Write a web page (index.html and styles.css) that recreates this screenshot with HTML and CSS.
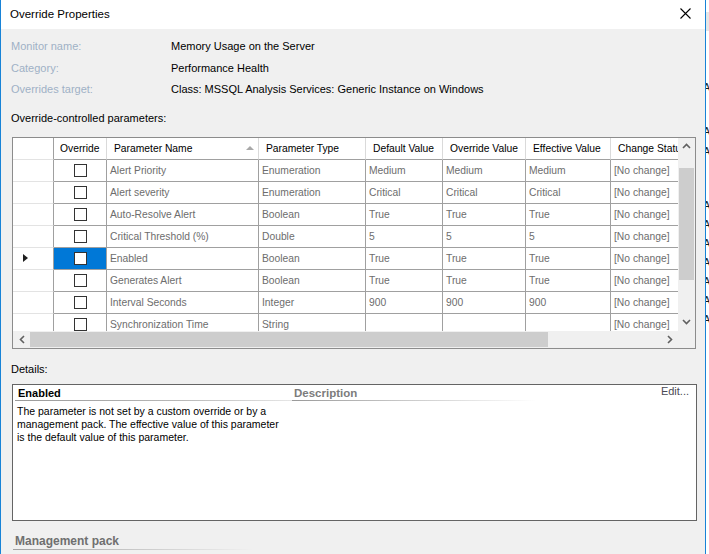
FILE: index.html
```html
<!DOCTYPE html>
<html>
<head>
<meta charset="utf-8">
<title>Override Properties</title>
<link rel="stylesheet" href="styles.css">
</head>
<body>
<div class="screen">
  <div class="dialog">
    <div class="titlebar">
      <span class="title">Override Properties</span>
      <svg class="close" width="11" height="11" viewBox="0 0 11 11"><path d="M0.5 0.5 L10.5 10.5 M10.5 0.5 L0.5 10.5" stroke="#000" stroke-width="1.1" fill="none"/></svg>
    </div>
    <div class="content">
      <div class="info">
        <div class="info-row"><span class="label">Monitor name:</span><span class="value">Memory Usage on the Server</span></div>
        <div class="info-row"><span class="label">Category:</span><span class="value">Performance Health</span></div>
        <div class="info-row"><span class="label">Overrides target:</span><span class="value">Class: MSSQL Analysis Services: Generic Instance on Windows</span></div>
      </div>
      <div class="section-label params-label">Override-controlled parameters:</div>
      <div class="grid">
        <div class="grid-main">
          <div class="viewport">
            <div class="row head">
              <div class="cell rh"></div>
              <div class="cell hc center">Override</div>
              <div class="cell hc sorted">Parameter Name<span class="sort"></span></div>
              <div class="cell hc">Parameter Type</div>
              <div class="cell hc">Default Value</div>
              <div class="cell hc">Override Value</div>
              <div class="cell hc">Effective Value</div>
              <div class="cell hc">Change Status</div>
            </div>
            <div class="row">
              <div class="cell rh"></div>
              <div class="cell chk"><span class="box"></span></div>
              <div class="cell">Alert Priority</div>
              <div class="cell">Enumeration</div>
              <div class="cell">Medium</div>
              <div class="cell">Medium</div>
              <div class="cell">Medium</div>
              <div class="cell">[No change]</div>
            </div>
            <div class="row">
              <div class="cell rh"></div>
              <div class="cell chk"><span class="box"></span></div>
              <div class="cell">Alert severity</div>
              <div class="cell">Enumeration</div>
              <div class="cell">Critical</div>
              <div class="cell">Critical</div>
              <div class="cell">Critical</div>
              <div class="cell">[No change]</div>
            </div>
            <div class="row">
              <div class="cell rh"></div>
              <div class="cell chk"><span class="box"></span></div>
              <div class="cell">Auto-Resolve Alert</div>
              <div class="cell">Boolean</div>
              <div class="cell">True</div>
              <div class="cell">True</div>
              <div class="cell">True</div>
              <div class="cell">[No change]</div>
            </div>
            <div class="row">
              <div class="cell rh"></div>
              <div class="cell chk"><span class="box"></span></div>
              <div class="cell">Critical Threshold (%)</div>
              <div class="cell">Double</div>
              <div class="cell">5</div>
              <div class="cell">5</div>
              <div class="cell">5</div>
              <div class="cell">[No change]</div>
            </div>
            <div class="row">
              <div class="cell rh current"><span class="tri"></span></div>
              <div class="cell chk selected"><span class="box"></span></div>
              <div class="cell">Enabled</div>
              <div class="cell">Boolean</div>
              <div class="cell">True</div>
              <div class="cell">True</div>
              <div class="cell">True</div>
              <div class="cell">[No change]</div>
            </div>
            <div class="row">
              <div class="cell rh"></div>
              <div class="cell chk"><span class="box"></span></div>
              <div class="cell">Generates Alert</div>
              <div class="cell">Boolean</div>
              <div class="cell">True</div>
              <div class="cell">True</div>
              <div class="cell">True</div>
              <div class="cell">[No change]</div>
            </div>
            <div class="row">
              <div class="cell rh"></div>
              <div class="cell chk"><span class="box"></span></div>
              <div class="cell">Interval Seconds</div>
              <div class="cell">Integer</div>
              <div class="cell">900</div>
              <div class="cell">900</div>
              <div class="cell">900</div>
              <div class="cell">[No change]</div>
            </div>
            <div class="row">
              <div class="cell rh"></div>
              <div class="cell chk"><span class="box"></span></div>
              <div class="cell">Synchronization Time</div>
              <div class="cell">String</div>
              <div class="cell"></div>
              <div class="cell"></div>
              <div class="cell"></div>
              <div class="cell">[No change]</div>
            </div>
          </div>
          <div class="vscroll">
            <div class="arrow"><svg width="9" height="6" viewBox="0 0 9 6"><path d="M1 5 L4.5 1.5 L8 5" stroke="#606060" stroke-width="1.6" fill="none"/></svg></div>
            <div class="vtrack"><div class="vthumb"></div></div>
            <div class="arrow"><svg width="9" height="6" viewBox="0 0 9 6"><path d="M1 1 L4.5 4.5 L8 1" stroke="#606060" stroke-width="1.6" fill="none"/></svg></div>
          </div>
        </div>
        <div class="hscroll-row">
          <div class="hscroll">
            <div class="harrow"><svg width="6" height="9" viewBox="0 0 6 9"><path d="M5 1 L1.5 4.5 L5 8" stroke="#606060" stroke-width="1.6" fill="none"/></svg></div>
            <div class="htrack"><div class="hthumb"></div></div>
            <div class="harrow"><svg width="6" height="9" viewBox="0 0 6 9"><path d="M1 1 L4.5 4.5 L1 8" stroke="#606060" stroke-width="1.6" fill="none"/></svg></div>
          </div>
          <div class="corner"></div>
        </div>
      </div>
      <div class="section-label details-label">Details:</div>
      <div class="details">
        <div class="details-head">
          <div class="dh dh-name">Enabled</div>
          <div class="dh dh-desc">Description</div>
          <div class="edit">Edit...</div>
        </div>
        <p class="details-text">The parameter is not set by a custom override or by a<br>management pack. The effective value of this parameter<br>is the default value of this parameter.</p>
      </div>
      <div class="mp">Management pack</div>
    </div>
  </div>
  <div class="behind">
    <div class="behind-bar"></div>
    <div class="behind-letters">
      <span class="ba l1">A</span>
      <span class="ba l2">A</span>
      <span class="ba l3">A</span>
      <span class="ba l4">A</span>
      <span class="ba l5">A</span>
      <span class="ba l5">A</span>
      <span class="ba l5">A</span>
      <span class="ba l5">A</span>
      <span class="ba l5">A</span>
      <span class="ba l5">A</span>
    </div>
  </div>
</div>
</body>
</html>
```
FILE: styles.css
```css
html, body {
  margin: 0;
  padding: 0;
  background: #ffffff;
}
body {
  font-family: "Liberation Sans", Arial, sans-serif;
  font-size: 11px;
  color: #000;
}
.screen {
  display: flex;
  width: 709px;
  height: 554px;
  overflow: hidden;
}
.dialog {
  width: 704px;
  flex: none;
  border-left: 1px solid #1883d7;
  border-right: 1px solid #1883d7;
  background: #f0f0f0;
  display: flex;
  flex-direction: column;
}
.titlebar {
  height: 29px;
  background: #fff;
  display: flex;
  align-items: center;
  justify-content: space-between;
  padding: 0 14px 0 9px;
}
.title {
  font-size: 11.5px;
  color: #000;
  margin-top: -1px;
}
.close {
  display: block;
  margin-top: -2px;
}
.content {
  padding: 7px 0 0 10px;
}
.info-row {
  display: flex;
  height: 21.5px;
  line-height: 21.5px;
}
.label {
  width: 160px;
  color: #9fb1c6;
}
.value {
  color: #000;
}
.section-label {
  line-height: 13px;
}
.params-label {
  margin-top: 11px;
}
.grid {
  margin: 12px 0 0 1px;
  width: 682px;
  border: 1px solid #8c8c8c;
  background: #f0f0f0;
}
.grid-main {
  display: flex;
  height: 193px;
}
.viewport {
  width: 665px;
  overflow: hidden;
  background: #fff;
}
.row {
  display: grid;
  grid-template-columns: 41px 53px 152px 107px 77px 83px 85px 90px;
  height: 22px;
  width: 688px;
}
.cell {
  box-sizing: border-box;
  height: 22px;
  border-right: 1px solid #a0a0a0;
  border-bottom: 1px solid #a0a0a0;
  padding-left: 3px;
  line-height: 21px;
  font-size: 10.3px;
  color: #6d6d6d;
  white-space: nowrap;
  overflow: hidden;
}
.cell.rh {
  border-bottom-color: #e3e3e3;
  display: flex;
  align-items: center;
}
.head .cell {
  color: #000;
  padding-left: 7px;
  border-right-color: #dadada;
}
.head .cell.rh {
  border-right-color: #a0a0a0;
}
.head .cell.center {
  padding-left: 6px;
}
.head .sorted {
  display: flex;
  align-items: center;
  justify-content: space-between;
  padding-right: 4px;
}
.sort {
  width: 0;
  height: 0;
  border-left: 4px solid transparent;
  border-right: 4px solid transparent;
  border-bottom: 4px solid #a8a8a8;
}
.tri {
  width: 0;
  height: 0;
  margin-left: 7px;
  border-top: 4px solid transparent;
  border-bottom: 4px solid transparent;
  border-left: 5px solid #1e1e1e;
}
.chk {
  display: flex;
  align-items: center;
  justify-content: center;
  padding-left: 0;
}
.chk.selected {
  background: #0078d7;
}
.box {
  box-sizing: border-box;
  width: 13px;
  height: 13px;
  border: 1px solid #333;
  background: #fff;
}
.vscroll {
  width: 17px;
  display: flex;
  flex-direction: column;
  background: #f0f0f0;
}
.arrow {
  height: 17px;
  display: flex;
  align-items: center;
  justify-content: center;
  flex: none;
}
.vtrack {
  flex: 1;
  padding-top: 13px;
}
.vthumb {
  margin: 0 1px;
  height: 112px;
  background: #cdcdcd;
}
.hscroll-row {
  display: flex;
  height: 17px;
}
.hscroll {
  width: 665px;
  display: flex;
  background: #f0f0f0;
}
.harrow {
  width: 17px;
  display: flex;
  align-items: center;
  justify-content: center;
  flex: none;
}
.htrack {
  flex: 1;
  padding: 1px 0;
}
.hthumb {
  width: 518px;
  height: 15px;
  background: #cdcdcd;
}
.corner {
  width: 17px;
  background: #f0f0f0;
}
.details-label {
  margin-top: 14px;
}
.details {
  margin: 8px 0 0 1px;
  width: 683px;
  height: 135px;
  border: 1px solid #646464;
  background: #fff;
}
.details-head {
  display: flex;
  align-items: flex-start;
  padding-left: 2px;
}
.dh {
  font-weight: bold;
  height: 16px;
  line-height: 14px;
  padding-top: 1px;
  box-sizing: border-box;
  background-repeat: no-repeat;
  background-position: left bottom;
  background-size: 100% 1px;
}
.dh-name {
  width: 277px;
  padding-left: 3px;
  color: #000;
  background-image: linear-gradient(to right, #9a9a9a, #b8b8b8 60%, #e6e6e6);
}
.dh-desc {
  width: 244px;
  padding-left: 2px;
  font-size: 11.5px;
  color: #7c7c7c;
  background-image: linear-gradient(to right, #9a9a9a, #ffffff);
}
.edit {
  margin-left: auto;
  margin-right: 7px;
  color: #4a4a55;
  line-height: 13px;
  padding-top: 0px;
}
.details-text {
  margin: 4px 0 0 4px;
  font-size: 10.5px;
  line-height: 13px;
  color: #000;
}
.mp {
  margin: 13px 0 0 2px;
  width: 238px;
  padding-left: 2px;
  font-size: 12px;
  font-weight: bold;
  color: #6f6f6f;
  line-height: 14px;
  padding-bottom: 2px;
  background-image: linear-gradient(to right, #a0a0a0, #f0f0f0);
  background-repeat: no-repeat;
  background-position: left bottom;
  background-size: 100% 1px;
}
.behind {
  flex: 1;
  background: #fff;
  overflow: hidden;
  position: relative;
}
.behind-bar {
  margin-top: 12px;
  height: 19px;
  background: #e6e6e6;
}
.behind-letters {
  display: flex;
  flex-direction: column;
  padding-top: 50px;
}
.ba {
  font-size: 11px;
  line-height: 13px;
  color: #1a1a1a;
  margin-left: -3px;
}
.l1 { margin-top: 0; }
.l2 { margin-top: 31px; }
.l3 { margin-top: 7px; }
.l4 { margin-top: 41px; }
.l5 { margin-top: 6px; }
```
